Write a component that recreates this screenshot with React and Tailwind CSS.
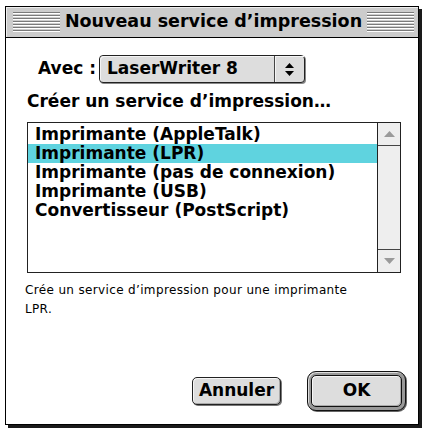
import React from 'react';

const ITEMS = [
  'Imprimante (AppleTalk)',
  'Imprimante (LPR)',
  'Imprimante (pas de connexion)',
  'Imprimante (USB)',
  'Convertisseur (PostScript)',
];

function Stripes() {
  return (
    <div className="flex-1 flex flex-col gap-px">
      {[0, 1, 2, 3, 4, 5, 6].map((i) => (
        <div key={i} className="h-[2px] border-t border-[#7a7a7a] bg-white" />
      ))}
    </div>
  );
}

export default function App() {
  const selected = 1;

  return (
    <div className="w-[426px] h-[429px] bg-white pl-[5px] pt-[6px] font-['DejaVu_Sans',sans-serif] text-black">
      <div className="w-[414px] h-[419px] border border-black bg-white flex flex-col shadow-[3px_3px_0_#1a1a1a]">
        {/* title bar */}
        <div className="h-[31px] shrink-0 bg-[#cccccc] border-b border-black flex items-center gap-[5px] pl-[7px] pr-[4px] shadow-[inset_1px_1px_0_#eeeeee]">
          <Stripes />
          <span className="text-[17.5px] font-bold leading-none whitespace-nowrap">
            Nouveau service d’impression
          </span>
          <Stripes />
        </div>

        {/* body */}
        <div className="flex-1 flex flex-col">
          <div className="flex items-center mt-[17px] pl-[32px]">
            <span className="w-[61px] text-[17px] font-bold whitespace-nowrap">Avec :</span>
            <div className="w-[206px] h-[28px] border border-[#222] rounded-[4px] bg-[#dddddd] flex shadow-[1px_1px_0_#888]">
              <div className="flex-1 flex items-center pl-[7px] text-[17px] font-bold shadow-[inset_1px_1px_0_#f4f4f4] rounded-l-[4px]">
                LaserWriter 8
              </div>
              <div className="w-[30px] border-l border-[#444] flex items-center justify-center shadow-[inset_1px_1px_0_#f4f4f4]">
                <svg width="9" height="13" viewBox="0 0 9 13">
                  <path d="M4.5 0 L9 5 L0 5 Z" fill="#000" />
                  <path d="M0 8 L9 8 L4.5 13 Z" fill="#000" />
                </svg>
              </div>
            </div>
          </div>

          <div className="mt-[7px] pl-[21px] text-[17px] font-bold leading-[22px] whitespace-nowrap">
            Créer un service d’impression…
          </div>

          <div className="mt-[10px] ml-[21px] w-[374px] h-[151px] border border-[#222] flex">
            <div className="flex-1 flex flex-col pt-[2px]">
              {ITEMS.map((item, i) => (
                <div
                  key={item}
                  className={`h-[19px] flex items-center pl-[7px] text-[17px] font-bold leading-none whitespace-nowrap ${
                    i === selected ? 'bg-[#5fd3df]' : ''
                  }`}
                >
                  {item}
                </div>
              ))}
            </div>
            <div className="w-[23px] border-l border-[#222] bg-[#eeeeee] flex flex-col justify-between">
              <div className="h-[23px] border-b border-[#444] flex items-center justify-center">
                <svg width="11" height="6" viewBox="0 0 11 6">
                  <path d="M5.5 0 L11 6 L0 6 Z" fill="#9a9a9a" />
                </svg>
              </div>
              <div className="h-[23px] border-t border-[#444] flex items-center justify-center">
                <svg width="11" height="6" viewBox="0 0 11 6">
                  <path d="M0 0 L11 0 L5.5 6 Z" fill="#9a9a9a" />
                </svg>
              </div>
            </div>
          </div>

          <p className="mt-[8px] pl-[19px] text-[12px] tracking-[0.35px] leading-[19px]">
            Crée un service d’impression pour une imprimante
            <br />
            LPR.
          </p>

          <div className="mt-auto flex justify-end items-center gap-[26px] pr-[12px] pb-[13px]">
            <button className="w-[89px] h-[28px] border border-[#222] rounded-[5px] bg-[#dddddd] text-[17px] font-bold shadow-[1px_1px_0_#777,inset_1px_1px_0_#f6f6f6,inset_-1px_-1px_0_#aaaaaa]">
              Annuler
            </button>
            <div className="w-[99px] h-[40px] border border-[#111] rounded-[9px] bg-[#999999] p-[3px] shadow-[1px_1px_0_#666,inset_1px_1px_0_#dddddd]">
              <button className="w-full h-full border border-[#111] rounded-[5px] bg-[#dddddd] text-[17px] font-bold shadow-[inset_1px_1px_0_#f6f6f6,inset_-1px_-1px_0_#aaaaaa]">
                OK
              </button>
            </div>
          </div>
        </div>
      </div>
    </div>
  );
}
